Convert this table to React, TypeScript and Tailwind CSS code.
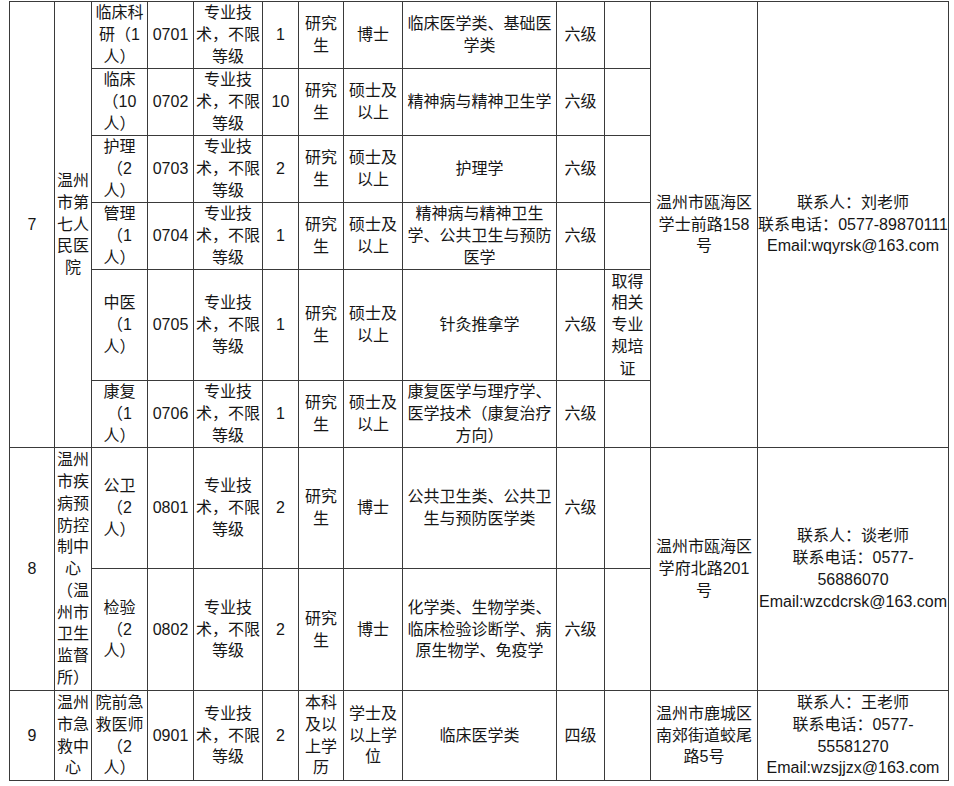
const font = { fontFamily: '"Liberation Sans", "Noto Sans CJK SC", sans-serif' }

// keep full-width punctuation at a full em, as in the source sheet
function Line({ text }: { text: string }) {
  return (
    <div className="whitespace-nowrap">
      {Array.from(text).map((ch, i) =>
        ch === "（" ? (
          <span key={i} className="inline-block w-[16px] text-right">
            {ch}
          </span>
        ) : ch === "，" ? (
          <span key={i} className="inline-block w-[16px] text-left">
            {ch}
          </span>
        ) : (
          ch
        )
      )}
    </div>
  )
}

type CellProps = {
  lines: string[]
  rowSpan?: number
}

function Cell({ lines, rowSpan }: CellProps) {
  return (
    <td rowSpan={rowSpan} className="border border-[#3a3a3a] p-0 text-center align-middle">
      {lines.map((l, i) => (
        <Line key={i} text={l} />
      ))}
    </td>
  )
}

const cat = ["专业技", "术，不限", "等级"]
const grad = ["研究", "生"]
const master = ["硕士及", "以上"]

type Job = {
  h: string
  pos: string[]
  code: string
  count: string
  edu: string[]
  degree: string[]
  major: string[]
  eng: string
  other: string[]
}

const hospital: Job[] = [
  { h: "h-[67px]", pos: ["临床科", "研（1", "人）"], code: "0701", count: "1", edu: grad, degree: ["博士"], major: ["临床医学类、基础医", "学类"], eng: "六级", other: [] },
  { h: "h-[67px]", pos: ["临床", "（10", "人）"], code: "0702", count: "10", edu: grad, degree: master, major: ["精神病与精神卫生学"], eng: "六级", other: [] },
  { h: "h-[67px]", pos: ["护理", "（2", "人）"], code: "0703", count: "2", edu: grad, degree: master, major: ["护理学"], eng: "六级", other: [] },
  { h: "h-[67px]", pos: ["管理", "（1", "人）"], code: "0704", count: "1", edu: grad, degree: master, major: ["精神病与精神卫生", "学、公共卫生与预防", "医学"], eng: "六级", other: [] },
  { h: "h-[111px]", pos: ["中医", "（1", "人）"], code: "0705", count: "1", edu: grad, degree: master, major: ["针灸推拿学"], eng: "六级", other: ["取得", "相关", "专业", "规培", "证"] },
  { h: "h-[67px]", pos: ["康复", "（1", "人）"], code: "0706", count: "1", edu: grad, degree: master, major: ["康复医学与理疗学、", "医学技术（康复治疗", "方向）"], eng: "六级", other: [] },
]

const cdc: Job[] = [
  { h: "h-[121px]", pos: ["公卫", "（2", "人）"], code: "0801", count: "2", edu: grad, degree: ["博士"], major: ["公共卫生类、公共卫", "生与预防医学类"], eng: "六级", other: [] },
  { h: "h-[122px]", pos: ["检验", "（2", "人）"], code: "0802", count: "2", edu: grad, degree: ["博士"], major: ["化学类、生物学类、", "临床检验诊断学、病", "原生物学、免疫学"], eng: "六级", other: [] },
]

function JobCells({ job }: { job: Job }) {
  return (
    <>
      <Cell lines={job.pos} />
      <Cell lines={[job.code]} />
      <Cell lines={cat} />
      <Cell lines={[job.count]} />
      <Cell lines={job.edu} />
      <Cell lines={job.degree} />
      <Cell lines={job.major} />
      <Cell lines={[job.eng]} />
      <Cell lines={job.other} />
    </>
  )
}

export default function App() {
  const widths = [45, 37, 56, 46, 69, 36, 45, 59, 154, 48, 46, 107, 191]

  return (
    <div className="h-[786px] w-[954px] overflow-hidden bg-white pl-[9px] pt-[1px]" style={font}>
      <table className="w-[940px] table-fixed border-collapse text-[16px] leading-[21.8px] text-[#161616]">
        <colgroup>
          {widths.map((w, i) => (
            <col key={i} style={{ width: w }} />
          ))}
        </colgroup>
        <tbody>
          {hospital.map((job, i) => (
            <tr key={job.code} className={job.h}>
              {i === 0 && (
                <>
                  <Cell rowSpan={6} lines={["7"]} />
                  <Cell rowSpan={6} lines={["温州", "市第", "七人", "民医", "院"]} />
                </>
              )}
              <JobCells job={job} />
              {i === 0 && (
                <>
                  <Cell rowSpan={6} lines={["温州市瓯海区", "学士前路158", "号"]} />
                  <Cell rowSpan={6} lines={["联系人：刘老师", "联系电话：0577-89870111", "Email:wqyrsk@163.com"]} />
                </>
              )}
            </tr>
          ))}

          {cdc.map((job, i) => (
            <tr key={job.code} className={job.h}>
              {i === 0 && (
                <>
                  <Cell rowSpan={2} lines={["8"]} />
                  <Cell
                    rowSpan={2}
                    lines={["温州", "市疾", "病预", "防控", "制中", "心", "（温", "州市", "卫生", "监督", "所）"]}
                  />
                </>
              )}
              <JobCells job={job} />
              {i === 0 && (
                <>
                  <Cell rowSpan={2} lines={["温州市瓯海区", "学府北路201", "号"]} />
                  <Cell rowSpan={2} lines={["联系人：谈老师", "联系电话：0577-", "56886070", "Email:wzcdcrsk@163.com"]} />
                </>
              )}
            </tr>
          ))}

          <tr className="h-[90px]">
            <Cell lines={["9"]} />
            <Cell lines={["温州", "市急", "救中", "心"]} />
            <Cell lines={["院前急", "救医师", "（2", "人）"]} />
            <Cell lines={["0901"]} />
            <Cell lines={cat} />
            <Cell lines={["2"]} />
            <Cell lines={["本科", "及以", "上学", "历"]} />
            <Cell lines={["学士及", "以上学", "位"]} />
            <Cell lines={["临床医学类"]} />
            <Cell lines={["四级"]} />
            <Cell lines={[]} />
            <Cell lines={["温州市鹿城区", "南郊街道蛟尾", "路5号"]} />
            <Cell lines={["联系人：王老师", "联系电话：0577-", "55581270", "Email:wzsjjzx@163.com"]} />
          </tr>
        </tbody>
      </table>
    </div>
  )
}
